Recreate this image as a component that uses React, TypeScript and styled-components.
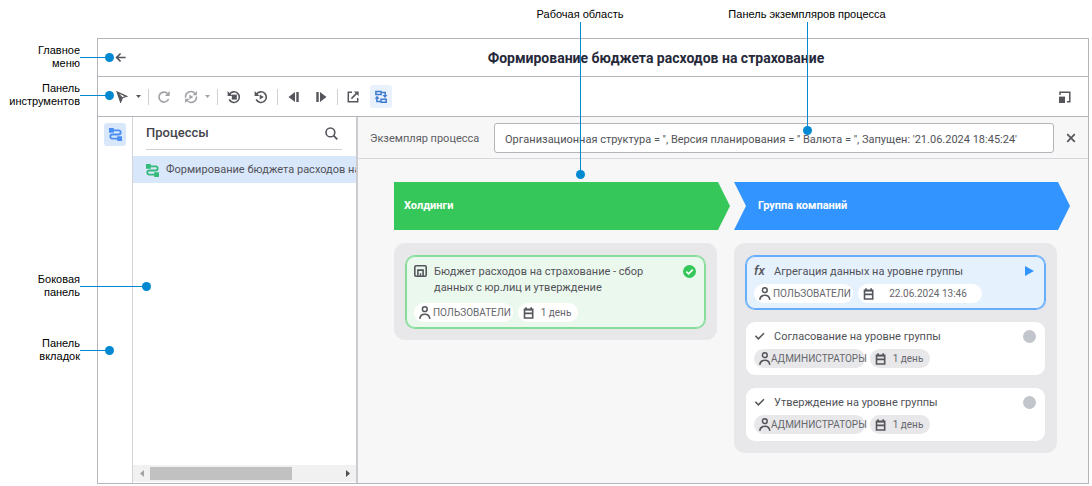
import React from 'react';
import styled, { createGlobalStyle, css } from 'styled-components';

const ink = '#55565c';
const muted = '#a2a3a8';
const frame = '#b4b4ba';
const callout = '#0088d1';

const GlobalStyle = createGlobalStyle`
  * { box-sizing: border-box; }
  body {
    margin: 0;
    background: #fff;
    color: #515257;
    font: 11px/16px Roboto, "Noto Sans", sans-serif;
  }
  button { border: 0; padding: 0; margin: 0; background: none; font: inherit; color: inherit; }
  h1, h2, h3, p, ul { margin: 0; padding: 0; }
  ul { list-style: none; }
`;

const Page = styled.div`
  min-height: 100vh;
  display: flex;
  flex-direction: column;
  padding: 0 3px 2px 0;
`;

/* ---- callouts ---- */

const calloutText = css`
  font: 11px/13px "Liberation Sans", Arial, sans-serif;
  color: #000;
`;

const TopLabels = styled.div`
  display: flex;
  gap: 103px;
  height: 38px;
  padding: 8px 0 0 536px;
`;

const TopLabel = styled.div<{ $w: number; $len: number }>`
  ${calloutText}
  position: relative;
  flex: none;
  width: ${(p) => p.$w}px;
  text-align: center;
  white-space: nowrap;
  &::before {
    content: '';
    position: absolute;
    z-index: 2;
    top: 14px;
    left: 50%;
    width: 1px;
    height: ${(p) => p.$len}px;
    background: ${callout};
  }
  &::after {
    content: '';
    position: absolute;
    z-index: 2;
    top: ${(p) => p.$len + 10}px;
    left: 50%;
    width: 9px;
    height: 9px;
    margin-left: -4px;
    border-radius: 50%;
    background: ${callout};
  }
`;

const Middle = styled.div`
  flex: 1;
  display: flex;
`;

const Gutter = styled.aside`
  flex: none;
  width: 97px;
  display: flex;
  flex-direction: column;
  gap: 165px;
  padding: 6px 17px 0 0;
`;

const GutterGroup = styled.div<{ $gap: number }>`
  display: flex;
  flex-direction: column;
  gap: ${(p) => p.$gap}px;
`;

const SideLabel = styled.div<{ $len: number }>`
  ${calloutText}
  position: relative;
  text-align: right;
  &::before {
    content: '';
    position: absolute;
    z-index: 2;
    top: 13px;
    left: 100%;
    height: 1px;
    width: ${(p) => p.$len}px;
    background: ${callout};
  }
  &::after {
    content: '';
    position: absolute;
    z-index: 2;
    top: 9px;
    left: 100%;
    width: 9px;
    height: 9px;
    margin-left: ${(p) => p.$len - 4}px;
    border-radius: 50%;
    background: ${callout};
  }
`;

/* ---- window ---- */

const Window = styled.main`
  flex: 1;
  min-width: 0;
  display: flex;
  flex-direction: column;
  border: 1px solid ${frame};
`;

const TitleBar = styled.header`
  display: flex;
  align-items: center;
  height: 38px;
  padding-left: 16px;
  border-bottom: 1px solid ${frame};
`;

const Title = styled.h1`
  flex: 1;
  padding-left: 96px;
  text-align: center;
  font-size: 14px;
  line-height: 20px;
  font-weight: 700;
  color: #26293a;
`;

const Toolbar = styled.div`
  display: flex;
  align-items: center;
  height: 40px;
  padding: 0 12px 0 13px;
  border-bottom: 1px solid ${frame};
`;

const IconButton = styled.button<{ $w?: number; $active?: boolean; $dim?: boolean }>`
  flex: none;
  display: flex;
  align-items: center;
  justify-content: center;
  width: ${(p) => p.$w ?? 22}px;
  height: 23px;
  border-radius: 3px;
  color: ${(p) => (p.$active ? '#3d7bd0' : p.$dim ? muted : ink)};
  background: ${(p) => (p.$active ? '#e9f1fd' : 'transparent')};
`;

const Divider = styled.span<{ $l?: number; $r?: number }>`
  flex: none;
  width: 1px;
  height: 16px;
  margin: 0 ${(p) => p.$r ?? 4}px 0 ${(p) => p.$l ?? 5}px;
  background: #cfcfd4;
`;

const Spacer = styled.span<{ $w?: number }>`
  flex: ${(p) => (p.$w ? `0 0 ${p.$w}px` : 1)};
`;

const Body = styled.div`
  flex: 1;
  display: flex;
  min-height: 0;
`;

const TabStrip = styled.nav`
  flex: none;
  width: 35px;
  padding: 6px;
  border-right: 1px solid #d3d3da;
`;

const TabButton = styled.button`
  display: flex;
  align-items: center;
  justify-content: center;
  width: 22px;
  height: 23px;
  border-radius: 3px;
  background: #d9e7fb;
  color: #4a8ef5;
`;

const SidePanel = styled.section`
  flex: none;
  width: 225px;
  display: flex;
  flex-direction: column;
  border-right: 2px solid #cbcbd1;
`;

const PanelHead = styled.div`
  display: flex;
  align-items: center;
  justify-content: space-between;
  height: 33px;
  margin: 0 14px 6px 13px;
  border-bottom: 1px solid #cfcfd4;
`;

const PanelTitle = styled.h2`
  font-size: 13px;
  line-height: 16px;
  font-weight: 500;
  color: #44454b;
`;

const TreeRow = styled.button`
  display: flex;
  align-items: center;
  gap: 7px;
  width: 100%;
  height: 27px;
  padding: 1px 0 0 13px;
  overflow: hidden;
  white-space: nowrap;
  background: #d9e7fb;
  svg { flex: none; color: #34bb7c; }
`;

const ScrollBar = styled.div`
  display: flex;
  align-items: center;
  height: 17px;
  margin: auto 0 1px;
  background: #f1f1f1;
`;

const ScrollArrow = styled.button<{ $off?: boolean }>`
  flex: none;
  display: flex;
  align-items: center;
  justify-content: center;
  width: 17px;
  height: 17px;
  color: ${(p) => (p.$off ? '#a3a3a3' : '#505050')};
`;

const ScrollTrack = styled.div`
  flex: 1;
  display: flex;
`;

const ScrollThumb = styled.span`
  width: 75%;
  height: 13px;
  background: #c1c1c1;
`;

/* ---- work area ---- */

const WorkArea = styled.section`
  flex: 1;
  min-width: 0;
  background: #f7f7f7;
`;

const InstanceBar = styled.div`
  display: flex;
  align-items: center;
  height: 42px;
  padding: 0 6px 0 12px;
  border-bottom: 1px solid #d6d6dc;
`;

const InstanceLabel = styled.label`
  flex: none;
  width: 124px;
  padding-top: 2px;
  color: #5c5d63;
`;

const InstanceInput = styled.input`
  flex: 1;
  min-width: 0;
  height: 30px;
  margin-right: 6px;
  padding: 3px 10px 0;
  border: 1px solid ${frame};
  border-radius: 3px;
  background: #fff;
  color: #515257;
  font: inherit;
`;

const Stages = styled.div`
  display: grid;
  grid-template-columns: 1fr 1fr;
  gap: 4px;
  align-items: start;
  padding: 23px 18px 30px 36px;
`;

const Chevron = styled.h2<{ $color: string; $notch?: boolean }>`
  display: flex;
  align-items: center;
  height: 48px;
  padding-left: ${(p) => (p.$notch ? 24 : 10)}px;
  background: ${(p) => p.$color};
  color: #fff;
  font-size: 11px;
  line-height: 16px;
  font-weight: 700;
  clip-path: polygon(
    0 0, calc(100% - 12px) 0, 100% 50%, calc(100% - 12px) 100%, 0 100%
    ${(p) => (p.$notch ? ', 12px 50%' : '')}
  );
`;

const StageBox = styled.ul`
  display: flex;
  flex-direction: column;
  gap: 13px;
  margin: 13px 13px 0 0;
  padding: 13px 12px 12px;
  border-radius: 11px;
  background: #e8e8ea;
`;

type Tone = 'done' | 'active' | 'idle';
const tones = {
  done: { bg: '#ebf8ee', line: '#86dd9a' },
  active: { bg: '#e6f1fe', line: '#66adfb' },
  idle: { bg: '#fff', line: '#fff' },
};

const Card = styled.li<{ $tone: Tone; $tall?: boolean }>`
  display: flex;
  flex-direction: column;
  gap: ${(p) => (p.$tall ? 7 : 4)}px;
  padding: ${(p) => (p.$tone === 'idle' ? '6px 8px 7px' : '7px 8px 6px')};
  border-radius: 9px;
  background: ${(p) => tones[p.$tone].bg};
  ${(p) => p.$tone !== 'idle' && `box-shadow: 0 0 0 1px ${tones[p.$tone].line}, inset 0 0 0 1px ${tones[p.$tone].line};`}
`;

const CardHead = styled.div`
  display: flex;
  align-items: flex-start;
`;

const CardIcon = styled.span`
  flex: none;
  display: flex;
  align-items: center;
  width: 20px;
  height: 16px;
  color: ${ink};
`;

const CardTitle = styled.h3`
  flex: 1;
  padding: 1px 26px 0 0;
  font-size: 11px;
  line-height: 16px;
  font-weight: 400;
`;

const Status = styled.span`
  flex: none;
  display: flex;
  align-items: center;
  width: 14px;
  height: 16px;
`;

const Chips = styled.div`
  display: flex;
  gap: 5px;
`;

const Chip = styled.span<{ $w: number; $gray?: boolean }>`
  flex: none;
  display: flex;
  align-items: center;
  width: ${(p) => p.$w}px;
  height: 19px;
  padding-left: 4px;
  border-radius: 10px;
  background: ${(p) => (p.$gray ? '#e8e8ea' : '#fff')};
  color: #66676c;
  font-size: 10px;
  line-height: 16px;
  white-space: nowrap;
  svg { flex: none; color: ${ink}; }
`;

const ChipText = styled.span`
  flex: 1;
  text-align: center;
`;

/* ---- icons ---- */

const Svg = ({ s = 14, w, children }: { s?: number; w?: number; children: React.ReactNode }) => (
  <svg width={w ?? s} height={s} viewBox={`0 0 ${w ?? s} ${s}`} fill="none" stroke="currentColor" strokeWidth="1.6" aria-hidden="true">
    {children}
  </svg>
);

const BackIcon = () => (
  <Svg s={12}><path d="M10.6 5.5H1.6M5.6 1.5 1.6 5.5 5.6 9.5" strokeWidth="1.7" /></Svg>
);
const CursorIcon = () => (
  <Svg s={12}><path d="M1.3 1.2 10.5 5.3 6.3 6.7 4.6 10.8Z" strokeWidth="1.4" /><path d="M2 2 6 6.4 4.6 9.4Z" fill="currentColor" strokeWidth="1" /></Svg>
);
const Caret = () => (
  <svg width="5" height="3" viewBox="0 0 5 3" fill="currentColor" aria-hidden="true"><path d="M0 0h5L2.5 3Z" /></svg>
);
const RefreshIcon = () => (
  <Svg><path d="M11.6 9A5 5 0 1 1 10.7 3.7" strokeWidth="1.7" /><path d="M12.7 1v5H7.8Z" fill="currentColor" stroke="none" /></Svg>
);
const RefreshPlayIcon = () => (
  <Svg>
    <path d="M1.6 7.6A5.3 5.3 0 0 1 11 3.6M12.4 6.4A5.3 5.3 0 0 1 3 10.4" strokeWidth="1.5" />
    <path d="M12.9.9v4.4H8.5ZM1.1 13.1V8.7h4.4ZM5.4 4.5v5L9.3 7Z" fill="currentColor" stroke="none" />
  </Svg>
);
const HistoryArc = () => (
  <>
    <path d="M2.6 4.2A5.3 5.3 0 1 1 2.2 9.3" strokeWidth="1.6" />
    <path d="M.6 1v4.9h4.9Z" fill="currentColor" stroke="none" />
  </>
);
const HistoryStopIcon = () => (
  <Svg><HistoryArc /><path d="M4.8 4.6h5v5h-5z" fill="currentColor" stroke="none" /></Svg>
);
const HistoryPlayIcon = () => (
  <Svg><HistoryArc /><path d="M5.7 4.4v5.2L9.8 7Z" fill="currentColor" stroke="none" /></Svg>
);
const StepBackIcon = () => (
  <Svg s={12}><path d="M7 1v10L.5 6ZM8.3 1h2.4v10H8.3Z" fill="currentColor" stroke="none" /></Svg>
);
const StepForwardIcon = () => (
  <Svg s={12}><path d="M5 1v10l6.5-5ZM1.3 1h2.4v10H1.3Z" fill="currentColor" stroke="none" /></Svg>
);
const ExternalIcon = () => (
  <Svg s={12}><path d="M5 1.3H1.3v9.4h9.4V7M4.4 7.6l5.2-5.2" strokeWidth="1.5" /><path d="M6.9.4h4.7v4.7Z" fill="currentColor" stroke="none" /></Svg>
);
const SchemeIcon = () => (
  <Svg>
    <path d="M1.9 1.4h5.2v3H1.9ZM7 9.2h5.2v3H7Z" strokeWidth="1.5" />
    <path d="M7.6 2.6h3.6v3.6M6.4 11.4H2.9V7.6" strokeWidth="1.5" />
    <path d="M8.4 5h5l-2.5 3ZM.6 8.8h5L3.1 5.8Z" fill="currentColor" stroke="none" />
  </Svg>
);
const ResizeIcon = () => (
  <Svg s={12}><path d="M1 4V1.2h9.8v9.6H8" strokeWidth="1.5" /><path d="M0 5.6h6V12H0Z" fill="currentColor" stroke="none" /></Svg>
);
const ProcessIcon = () => (
  <Svg s={13}>
    <path d="M3 2.4h6.6a2 2 0 0 1 0 4.1H3.4a2.1 2.1 0 0 0 0 4.2H10" strokeWidth="1.8" />
    <path d="M0 0h4.8v4.8H0ZM8.2 8.2H13V13H8.2Z" fill="currentColor" stroke="none" />
  </Svg>
);
const SearchIcon = () => (
  <Svg s={13}><circle cx="5.4" cy="5.4" r="4.4" /><path d="m8.6 8.6 3.7 3.7" strokeWidth="1.8" /></Svg>
);
const CloseIcon = () => (
  <Svg s={10}><path d="m1.2 1.2 7.6 7.6M8.8 1.2 1.2 8.8" strokeWidth="1.7" /></Svg>
);
const FormIcon = () => (
  <Svg s={12} w={13}><path d="M2 .8h9q1.2 0 1.2 1.2v8q0 1.2-1.2 1.2H2Q.8 11.2.8 10V2Q.8.8 2 .8ZM3.9 11V5.1h5.2V11" strokeWidth="1.6" /><path d="M6.5 8.2V11" strokeWidth="1.4" /></Svg>
);
const CheckIcon = () => (
  <Svg s={10} w={12}><path d="m1.4 4.8 3 3 5.6-5.6" strokeWidth="1.6" /></Svg>
);
const FxIcon = styled.i`
  font: italic 500 13px/16px Roboto, sans-serif;
`;
const PersonIcon = () => (
  <Svg s={13}><circle cx="6.8" cy="3.2" r="2.4" strokeWidth="1.5" /><path d="M1.8 12.9Q2.2 8.3 6.8 8.3t5 4.6" strokeWidth="1.6" /></Svg>
);
const CalendarIcon = () => (
  <Svg s={12} w={12}><path d="M2.5 2.4h8.2v8.6H2.5ZM2.5 6.4h8.2" strokeWidth="1.6" /><path d="M2 2.8h9M4 .2v2M9.2.2v2" strokeWidth="1.6" /></Svg>
);
const DoneIcon = () => (
  <Svg s={13}><circle cx="6.5" cy="6.5" r="6.5" fill="#35c75a" stroke="none" /><path d="m3.4 6.6 2.2 2.2 4.2-4.2" stroke="#fff" /></Svg>
);
const PlayIcon = () => (
  <Svg s={10} w={13}><path d="M2 0v10l9-5Z" fill="#3294ff" stroke="none" /></Svg>
);
const IdleIcon = () => (
  <Svg s={13}><circle cx="6.5" cy="6.5" r="6.5" fill="#c2c5cb" stroke="none" /></Svg>
);
const TriLeft = () => (
  <svg width="4" height="7" viewBox="0 0 4 7" fill="currentColor" aria-hidden="true"><path d="M4 0v7L0 3.5Z" /></svg>
);
const TriRight = () => (
  <svg width="4" height="7" viewBox="0 0 4 7" fill="currentColor" aria-hidden="true"><path d="M0 0v7l4-3.5Z" /></svg>
);

const statusIcons = { done: <DoneIcon />, active: <PlayIcon />, idle: <IdleIcon /> };

interface TaskProps {
  icon: React.ReactNode;
  title: string;
  tone: Tone;
  who: string;
  whoWidth: number;
  term: string;
  termWidth: number;
  tall?: boolean;
}

const Task = ({ icon, title, tone, who, whoWidth, term, termWidth, tall }: TaskProps) => (
  <Card $tone={tone} $tall={tall}>
    <CardHead>
      <CardIcon>{icon}</CardIcon>
      <CardTitle>{title}</CardTitle>
      <Status>{statusIcons[tone]}</Status>
    </CardHead>
    <Chips>
      <Chip $w={whoWidth} $gray={tone === 'idle'}><PersonIcon /><ChipText>{who}</ChipText></Chip>
      <Chip $w={termWidth} $gray={tone === 'idle'}><CalendarIcon /><ChipText>{term}</ChipText></Chip>
    </Chips>
  </Card>
);

export default function App() {
  return (
    <Page>
      <GlobalStyle />
      <TopLabels>
        <TopLabel $w={88} $len={152}>Рабочая область</TopLabel>
        <TopLabel $w={160} $len={108}>Панель экземпляров процесса</TopLabel>
      </TopLabels>
      <Middle>
        <Gutter>
          <GutterGroup $gap={12}>
            <SideLabel $len={29}>Главное<br />меню</SideLabel>
            <SideLabel $len={29}>Панель<br />инструментов</SideLabel>
          </GutterGroup>
          <GutterGroup $gap={38}>
            <SideLabel $len={66}>Боковая<br />панель</SideLabel>
            <SideLabel $len={29}>Панель<br />вкладок</SideLabel>
          </GutterGroup>
        </Gutter>
        <Window>
          <TitleBar>
            <IconButton $w={14} aria-label="Назад"><BackIcon /></IconButton>
            <Title>Формирование бюджета расходов на страхование</Title>
          </TitleBar>
          <Toolbar>
            <IconButton aria-label="Выделение"><CursorIcon /></IconButton>
            <IconButton $w={10} aria-label="Режимы выделения"><Caret /></IconButton>
            <Divider $l={5} $r={4} />
            <IconButton $dim aria-label="Обновить"><RefreshIcon /></IconButton>
            <Spacer $w={5} />
            <IconButton $dim aria-label="Автообновление"><RefreshPlayIcon /></IconButton>
            <IconButton $w={10} $dim aria-label="Параметры обновления"><Caret /></IconButton>
            <Divider $l={5} $r={5} />
            <IconButton aria-label="Остановить"><HistoryStopIcon /></IconButton>
            <Spacer $w={5} />
            <IconButton aria-label="Запустить"><HistoryPlayIcon /></IconButton>
            <Divider $l={5} $r={5} />
            <IconButton aria-label="Предыдущий шаг"><StepBackIcon /></IconButton>
            <Spacer $w={5} />
            <IconButton aria-label="Следующий шаг"><StepForwardIcon /></IconButton>
            <Divider $l={5} $r={4} />
            <IconButton aria-label="Открыть"><ExternalIcon /></IconButton>
            <Spacer $w={6} />
            <IconButton $active aria-label="Экземпляры процесса"><SchemeIcon /></IconButton>
            <Spacer />
            <IconButton aria-label="Развернуть"><ResizeIcon /></IconButton>
          </Toolbar>
          <Body>
            <TabStrip>
              <TabButton aria-label="Процессы"><ProcessIcon /></TabButton>
            </TabStrip>
            <SidePanel>
              <PanelHead>
                <PanelTitle>Процессы</PanelTitle>
                <IconButton aria-label="Поиск"><SearchIcon /></IconButton>
              </PanelHead>
              <TreeRow><ProcessIcon />Формирование бюджета расходов на страхование</TreeRow>
              <ScrollBar>
                <ScrollArrow $off aria-label="Влево"><TriLeft /></ScrollArrow>
                <ScrollTrack><ScrollThumb /></ScrollTrack>
                <ScrollArrow aria-label="Вправо"><TriRight /></ScrollArrow>
              </ScrollBar>
            </SidePanel>
            <WorkArea>
              <InstanceBar>
                <InstanceLabel htmlFor="instance">Экземпляр процесса</InstanceLabel>
                <InstanceInput
                  id="instance"
                  type="text"
                  defaultValue={`Организационная структура = '', Версия планирования = '' Валюта = '', Запущен: '21.06.2024 18:45:24'`}
                />
                <IconButton aria-label="Закрыть"><CloseIcon /></IconButton>
              </InstanceBar>
              <Stages>
                <section>
                  <Chevron $color="#35c75a">Холдинги</Chevron>
                  <StageBox>
                    <Task
                      tall
                      tone="done"
                      icon={<FormIcon />}
                      title="Бюджет расходов на страхование - сбор данных с юр.лиц и утверждение"
                      who="ПОЛЬЗОВАТЕЛИ"
                      whoWidth={99}
                      term="1 день"
                      termWidth={60}
                    />
                  </StageBox>
                </section>
                <section>
                  <Chevron $color="#3294ff" $notch>Группа компаний</Chevron>
                  <StageBox>
                    <Task tone="active" icon={<FxIcon>fx</FxIcon>} title="Агрегация данных на уровне группы" who="ПОЛЬЗОВАТЕЛИ" whoWidth={99} term="22.06.2024 13:46" termWidth={124} />
                    <Task tone="idle" icon={<CheckIcon />} title="Согласование на уровне группы" who="АДМИНИСТРАТОРЫ" whoWidth={111} term="1 день" termWidth={60} />
                    <Task tone="idle" icon={<CheckIcon />} title="Утверждение на уровне группы" who="АДМИНИСТРАТОРЫ" whoWidth={111} term="1 день" termWidth={60} />
                  </StageBox>
                </section>
              </Stages>
            </WorkArea>
          </Body>
        </Window>
      </Middle>
    </Page>
  );
}
